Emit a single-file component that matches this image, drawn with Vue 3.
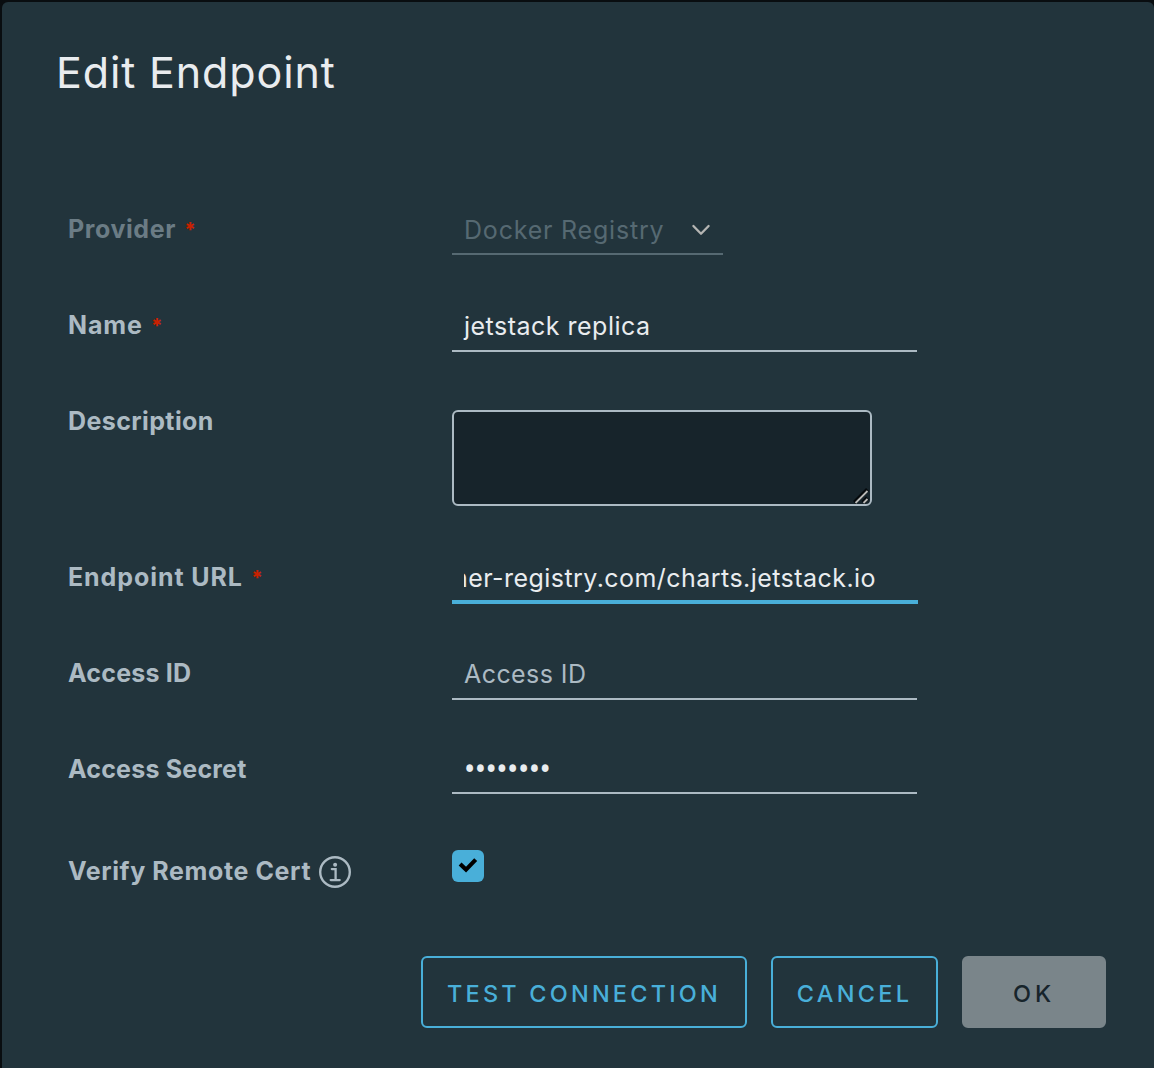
<script setup>
import { ref } from 'vue'

const url = ref('ner-registry.com/charts.jetstack.io')
const secret = '•'.repeat(8)
</script>

<template>
  <div class="backdrop">
    <section class="modal" role="dialog" aria-label="Edit Endpoint">
      <h3 class="title">Edit Endpoint</h3>

      <form class="form" @submit.prevent>
        <div class="row">
          <label class="label disabled provider-label">Provider<span class="required">*</span></label>
          <div class="select">
            <span class="select-text">Docker Registry</span>
            <svg class="chevron" viewBox="0 0 20 14" width="20" height="14">
              <path d="M2.4 3 L10 10.8 L17.6 3" fill="none" stroke="currentColor" stroke-width="2.3" stroke-linecap="round" stroke-linejoin="round" />
            </svg>
          </div>
        </div>

        <div class="row">
          <label class="label name-label">Name<span class="required">*</span></label>
          <div class="input name-input">jetstack replica</div>
        </div>

        <div class="row row-tall">
          <label class="label description-label">Description</label>
          <div class="textarea">
            <svg class="grip" viewBox="0 0 16 16" width="16" height="16">
              <path d="M1.5 14.5 L14.5 1.5 M10 14.5 L14.5 10" stroke="#05090c" stroke-width="4" />
              <path d="M2.5 15 L14.5 3 M10.5 15 L14.5 11" stroke="#b9b9b7" stroke-width="1.8" />
            </svg>
          </div>
        </div>

        <div class="row">
          <label class="label url-label">Endpoint URL<span class="required">*</span></label>
          <div class="input focused"><div class="clip">{{ url }}</div></div>
        </div>

        <div class="row">
          <label class="label id-label">Access ID</label>
          <div class="input placeholder">Access ID</div>
        </div>

        <div class="row">
          <label class="label secret-label">Access Secret</label>
          <div class="input secret">{{ secret }}</div>
        </div>

        <div class="row row-check">
          <label class="label verify-label">
            <span>Verify Remote Cert</span>
            <svg class="info" viewBox="0 0 32 32" width="32" height="32">
              <circle cx="16" cy="16" r="14.8" fill="none" stroke="currentColor" stroke-width="2.4" />
              <circle cx="16.1" cy="8.7" r="2" fill="currentColor" />
              <path d="M12.8 13.1 H16.6 V24 M11.7 24.1 H20.7" fill="none" stroke="currentColor" stroke-width="2.3" stroke-linecap="round" />
            </svg>
          </label>
          <span class="checkbox">
            <svg viewBox="0 0 32 32" width="32" height="32">
              <path d="M8.1 14 L14 19.6 L23.7 9.6" fill="none" stroke="#000" stroke-width="4.1" />
            </svg>
          </span>
        </div>
      </form>

      <footer class="footer">
        <button class="btn test">TEST CONNECTION</button>
        <button class="btn cancel">CANCEL</button>
        <button class="btn ok">OK</button>
      </footer>
    </section>
  </div>
</template>

<style>
body {
  background: #090d10;
}
</style>

<style scoped>
.backdrop {
  box-sizing: border-box;
  height: 1068px;
  padding: 2px 0 0 2px;
  background: #090d10;
  font-family: Inter, "Liberation Sans", sans-serif;
}

.modal {
  display: flex;
  flex-direction: column;
  box-sizing: border-box;
  height: 1066px;
  border-radius: 6px 6px 0 0;
  background: #22343c;
}

.title {
  margin: 0;
  padding: 40px 0 0 54px;
  height: 164px;
  font-size: 43px;
  font-weight: 400;
  line-height: 60px;
  letter-spacing: 0.87px;
  color: #e9ecef;
}

.form {
  padding-left: 66px;
}

.row {
  display: flex;
  align-items: flex-start;
  height: 96px;
}

.row-tall {
  height: 156px;
}

.row-check {
  height: 114px;
}

.label {
  display: flex;
  width: 384px;
  height: 46px;
  font-size: 25px;
  font-weight: 700;
  line-height: 46px;
  color: #acbac3;
  white-space: nowrap;
}

.disabled {
  color: #6b7c85;
}

.provider-label { letter-spacing: 0.58px; }
.name-label { letter-spacing: 0.85px; }
.description-label { letter-spacing: 0.4px; }
.url-label { letter-spacing: 0.92px; }
.id-label { letter-spacing: 0.22px; }
.secret-label { letter-spacing: 0.2px; }

.required {
  margin-left: 8.3px;
  font-size: 20px;
  font-weight: 800;
  line-height: 49px;
  color: #c92100;
}

.select,
.input {
  box-sizing: border-box;
  height: 50px;
  padding-left: 12px;
  border-bottom: 2px solid #acbac3;
  font-size: 25px;
  line-height: 48px;
  color: #e9ecef;
  white-space: nowrap;
}

.input {
  width: 465px;
}

.select {
  display: flex;
  align-items: center;
  justify-content: space-between;
  width: 271px;
  height: 49px;
  padding-right: 12px;
  border-color: #566972;
  color: #566972;
  letter-spacing: 0.8px;
}

.chevron {
  color: #b5b5b3;
}

.name-input {
  letter-spacing: 0.49px;
}

.focused {
  width: 466px;
  border-bottom: 4px solid #49afd9;
  letter-spacing: 0.45px;
}

.clip {
  display: flex;
  justify-content: flex-end;
  width: 412px;
  overflow: hidden;
}

.placeholder {
  color: #acbac3;
  letter-spacing: 0.43px;
}

.secret {
  height: 48px;
  font-family: "Noto Sans", sans-serif;
  font-size: 30px;
  line-height: 46px;
  letter-spacing: -0.5px;
}

.textarea {
  display: flex;
  align-items: flex-end;
  justify-content: flex-end;
  box-sizing: border-box;
  width: 420px;
  height: 96px;
  margin-top: 12px;
  border: 2px solid #acbac3;
  border-radius: 6px;
  background: #17242b;
}

.grip {
  margin: 0 1px 0 0;
}

.verify-label {
  align-items: center;
  margin-top: 6px;
  letter-spacing: 0.61px;
}

.info {
  margin: 1px 0 0 8px;
}

.checkbox {
  display: flex;
  width: 32px;
  height: 32px;
  margin-top: 8px;
  border-radius: 6px;
  background: #49afd9;
}

.footer {
  display: flex;
  justify-content: flex-end;
  gap: 24px;
  padding-right: 48px;
}

.btn {
  box-sizing: border-box;
  height: 72px;
  margin: 0;
  padding: 2px 0 0;
  border: 2px solid #49afd9;
  border-radius: 6px;
  background: transparent;
  font-family: inherit;
  font-size: 23.5px;
  font-weight: 500;
  color: #49afd9;
}

.test {
  width: 326px;
  letter-spacing: 3.2px;
}

.cancel {
  width: 167px;
  letter-spacing: 3.3px;
}

.ok {
  width: 144px;
  border-color: #7a858a;
  background: #7a858a;
  color: #17242b;
  letter-spacing: 3.9px;
}
</style>
